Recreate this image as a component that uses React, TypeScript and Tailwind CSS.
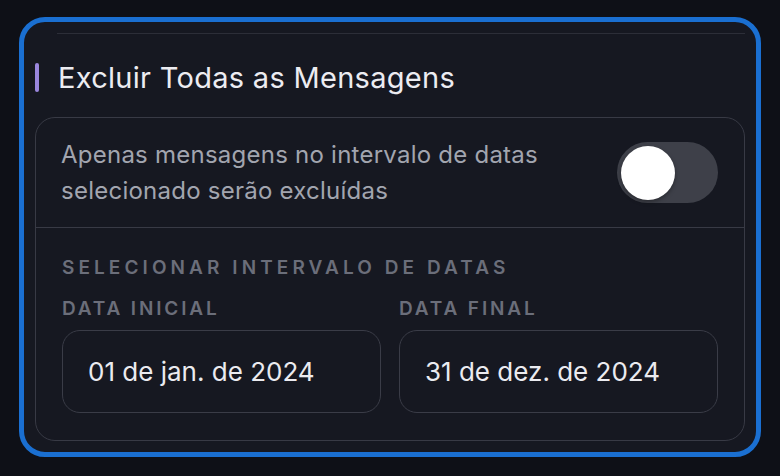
import React from "react";

export default function App() {
  return (
    <div
      className="w-[780px] h-[476px] bg-[#0e1017] pl-[19px] pt-[17px]"
      style={{ fontFamily: "Inter, 'Noto Sans', sans-serif" }}
    >
      <div className="w-[742px] h-[440px] border-[5px] border-[#1a6fd1] rounded-[26px] bg-[#161821] overflow-hidden px-[11px]">
        <div className="mt-[11px] h-px ml-[22px] bg-[#2c2e38]" />
        <div className="mt-[21px] h-[44px] flex items-center gap-[19px]">
          <div className="w-[4px] h-[29px] rounded-full bg-[#9a86dd]" />
          <div className="text-[29px] leading-none tracking-[0.01em] text-[#ececf1] font-normal">
            Excluir Todas as Mensagens
          </div>
        </div>
        <div className="mt-[18px] border border-[#383a45] rounded-[20px]">
          <div className="h-[110px] flex items-center justify-between pl-[25px] pr-[26px] border-b border-[#383a45]">
            <div className="text-[24px] leading-[36px] tracking-[0.01em] text-[#a2a5af]">
              Apenas mensagens no intervalo de datas
              <br />
              selecionado serão excluídas
            </div>
            <div className="w-[101px] h-[61px] rounded-full bg-[#3e4049] p-[4px] flex items-center">
              <div className="w-[54px] h-[54px] rounded-full bg-white shadow-[0_2px_4px_rgba(0,0,0,0.35)]" />
            </div>
          </div>
          <div className="px-[26px] pt-[28px] pb-[27px]">
            <div className="text-[19px] leading-[24px] font-semibold tracking-[0.215em] text-[#6b6e7a]">
              SELECIONAR INTERVALO DE DATAS
            </div>
            <div className="mt-[17px] grid grid-cols-2 gap-[18px]">
              <div>
                <div className="text-[19px] leading-[24px] font-semibold tracking-[0.15em] text-[#6b6e7a]">
                  DATA INICIAL
                </div>
                <div className="mt-[9px] h-[83px] border border-[#3a3c47] rounded-[18px] flex items-center pl-[25px] text-[26px] text-[#ebebf0]">
                  01 de jan. de 2024
                </div>
              </div>
              <div>
                <div className="text-[19px] leading-[24px] font-semibold tracking-[0.15em] text-[#6b6e7a]">
                  DATA FINAL
                </div>
                <div className="mt-[9px] h-[83px] border border-[#3a3c47] rounded-[18px] flex items-center pl-[25px] text-[26px] text-[#ebebf0]">
                  31 de dez. de 2024
                </div>
              </div>
            </div>
          </div>
        </div>
      </div>
    </div>
  );
}
